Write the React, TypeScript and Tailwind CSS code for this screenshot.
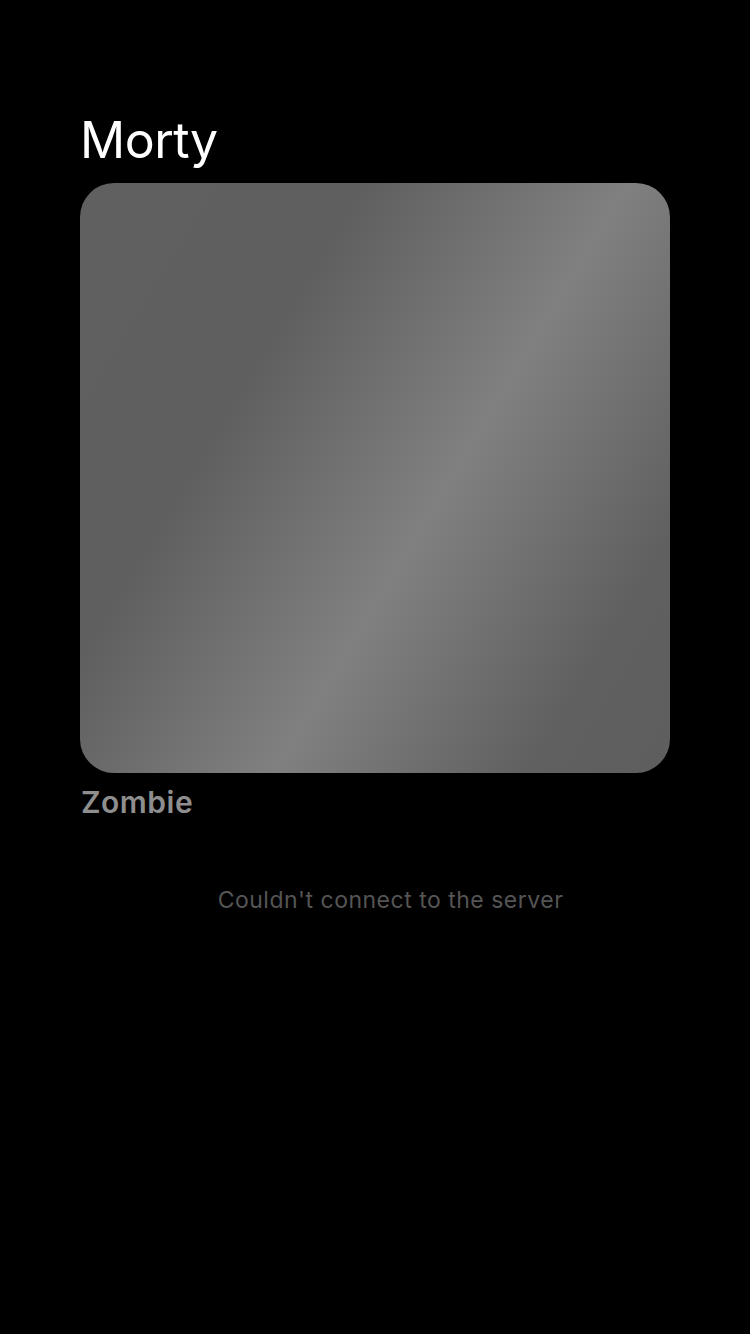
export default function App() {
  return (
    <div className="min-h-[1334px] w-full bg-black font-['Inter',sans-serif]">
      <div className="px-20 pt-[108px]">
        <h1 className="text-[50px] font-normal leading-[64px] tracking-[-0.5px] text-white">Morty</h1>
        <div className="mt-[11px] h-[590px] w-[590px] rounded-[34px] bg-[linear-gradient(121deg,#606060_0%,#5f5f5f_30%,#808080_58%,#606060_85%,#5e5e5e_100%)]" />
        <p className="mt-[13px] pl-px text-[30px] font-semibold leading-[32px] tracking-[0.5px] text-[#8e8e8e]">Zombie</p>
      </div>
      <p className="mt-[68px] pl-[31px] text-center text-[23px] leading-[28px] tracking-[0.5px] text-[#555555]">
        Couldn't connect to the server
      </p>
    </div>
  );
}
